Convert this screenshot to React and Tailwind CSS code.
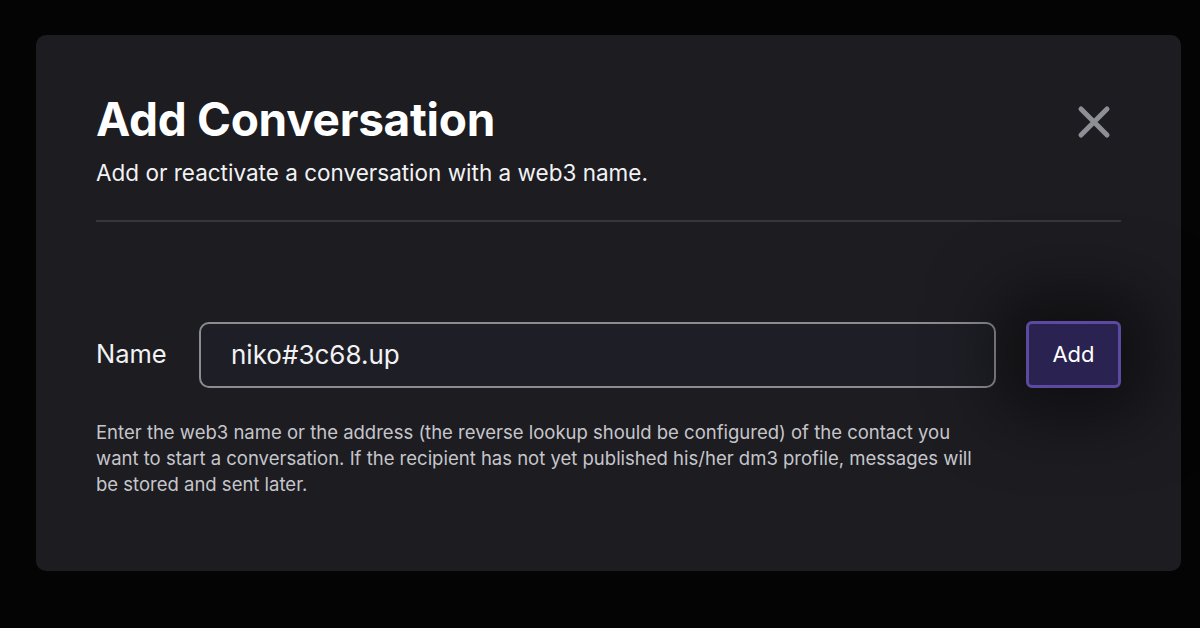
import React from "react";

export default function App() {
  return (
    <div className="w-[1200px] h-[628px] bg-[#040404] pt-[35px] pl-[36px]" style={{ fontFamily: "Inter, 'Noto Sans', sans-serif" }}>
      <div className="w-[1145px] h-[536px] bg-[#1c1c21] rounded-[10px] pl-[60px] pr-[60px] pt-[56px]">
        <div className="flex justify-between items-start">
          <div>
            <h1 className="text-[46px] leading-[56px] font-bold text-white tracking-[-0.3px]">Add Conversation</h1>
            <p className="text-[22.5px] leading-[30px] text-[#f2f2f4] mt-[11px]">Add or reactivate a conversation with a web3 name.</p>
          </div>
          <svg width="34" height="34" viewBox="0 0 34 34" className="mt-[14px] mr-[10px]">
            <path d="M4 4 L30 30 M30 4 L4 30" stroke="#8e8e96" strokeWidth="5" strokeLinecap="round" />
          </svg>
        </div>
        <div className="h-[2px] bg-[#35353b] mt-[32px]"></div>
        <div className="flex items-center mt-[99px]">
          <span className="text-[25.5px] text-[#f2f2f4] w-[103px]">Name</span>
          <div className="w-[797px] h-[66px] rounded-[10px] border-2 border-[#8b8b91] bg-[#1e1f26] flex items-center pl-[30px]">
            <span className="text-[26px] text-[#f2f2f4]">niko#3c68.up</span>
          </div>
          <button className="ml-[30px] w-[95px] h-[67px] rounded-[6px] border-[3px] border-[#5b4a9f] bg-[#2a2250] text-[22px] text-white shadow-[0_0_70px_25px_rgba(0,0,0,0.5)]">Add</button>
        </div>
        <p className="mt-[31px] w-[890px] text-[18.5px] leading-[26px] text-[#c6c6cb]">
          Enter the web3 name or the address (the reverse lookup should be configured) of the contact you want to start a conversation. If the recipient has not yet published his/her dm3 profile, messages will be stored and sent later.
        </p>
      </div>
    </div>
  );
}
